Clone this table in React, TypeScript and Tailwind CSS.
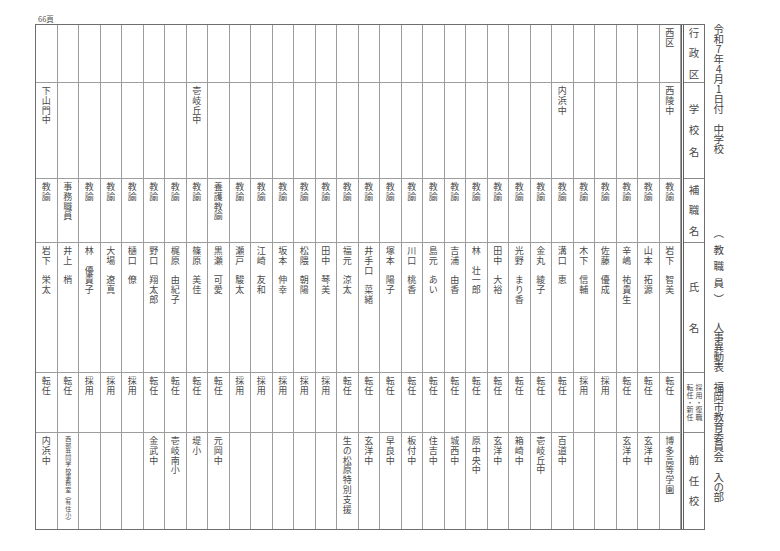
import React from 'react';

type Row = {
  ku?: string;
  school?: string;
  post: string;
  name: string;
  type: string;
  prev?: string;
  small?: boolean;
};

// right to left, as printed
const rows: Row[] = [
  { ku: '西区', school: '西陵中', post: '教諭', name: '岩下　智美', type: '転任', prev: '博多高等学園' },
  { post: '教諭', name: '山本　拓源', type: '転任', prev: '玄洋中' },
  { post: '教諭', name: '辛嶋　祐貴生', type: '転任', prev: '玄洋中' },
  { post: '教諭', name: '佐藤　優成', type: '採用' },
  { post: '教諭', name: '木下　信輔', type: '採用' },
  { school: '内浜中', post: '教諭', name: '溝口　恵', type: '転任', prev: '百道中' },
  { post: '教諭', name: '金丸　綾子', type: '転任', prev: '壱岐丘中' },
  { post: '教諭', name: '光野　まり香', type: '転任', prev: '箱崎中' },
  { post: '教諭', name: '田中　大裕', type: '転任', prev: '玄洋中' },
  { post: '教諭', name: '林　壮一郎', type: '転任', prev: '原中央中' },
  { post: '教諭', name: '吉浦　由香', type: '転任', prev: '城西中' },
  { post: '教諭', name: '島元　あい', type: '転任', prev: '住吉中' },
  { post: '教諭', name: '川口　桃香', type: '転任', prev: '板付中' },
  { post: '教諭', name: '塚本　陽子', type: '転任', prev: '早良中' },
  { post: '教諭', name: '井手口　菜緒', type: '転任', prev: '玄洋中' },
  { post: '教諭', name: '福元　涼太', type: '転任', prev: '生の松原特別支援' },
  { post: '教諭', name: '田中　琴美', type: '採用' },
  { post: '教諭', name: '松隈　朝陽', type: '採用' },
  { post: '教諭', name: '坂本　伸幸', type: '採用' },
  { post: '教諭', name: '江崎　友和', type: '採用' },
  { post: '教諭', name: '瀬戸　駿太', type: '採用' },
  { post: '養護教諭', name: '黒瀬　可愛', type: '転任', prev: '元岡中' },
  { school: '壱岐丘中', post: '教諭', name: '篠原　美佳', type: '転任', prev: '堤小' },
  { post: '教諭', name: '梶原　由紀子', type: '転任', prev: '壱岐南小' },
  { post: '教諭', name: '野口　翔太郎', type: '転任', prev: '金武中' },
  { post: '教諭', name: '樋口　僚', type: '採用' },
  { post: '教諭', name: '大場　遼真', type: '採用' },
  { post: '教諭', name: '林　優貴子', type: '採用' },
  { post: '事務職員', name: '井上　梢', type: '転任', prev: '西部共同学校事務室（有住小）', small: true },
  { school: '下山門中', post: '教諭', name: '岩下　栄太', type: '転任', prev: '内浜中' },
];

function Cell({ h, text, small, last }: { h: string; text?: string; small?: boolean; last?: boolean }) {
  return (
    <div className={`${h} ${last ? '' : 'border-b border-[#9d9d9d]'} flex justify-center items-start pt-[3px]`}>
      {text && (
        <span
          className={`[writing-mode:vertical-rl] leading-none ${
            small ? 'text-[6px] tracking-[0.3px]' : 'text-[9px] tracking-[0.8px]'
          }`}
        >
          {text}
        </span>
      )}
    </div>
  );
}

function HeadCell({ h, chars, gap, last }: { h: string; chars: string; gap: string; last?: boolean }) {
  return (
    <div className={`${h} ${last ? '' : 'border-b border-[#8a8a8a]'} flex flex-col items-center justify-center ${gap}`}>
      {chars.split('').map((c, i) => (
        <span key={i} className="text-[10.5px] leading-none">
          {c}
        </span>
      ))}
    </div>
  );
}

export default function App() {
  return (
    <div className="w-[780px] h-[551px] bg-white flex text-[#4a4a4a] font-['Noto_Sans_CJK_JP',sans-serif]">
      {/* table block */}
      <div className="ml-[35px] flex flex-col">
        <div className="h-[24px] flex items-end pb-[2px] pl-[3px]">
          <span className="text-[7.5px] leading-none text-[#555]">66頁</span>
        </div>

        <div className="w-[670px] h-[506px] flex flex-row-reverse border-[1.5px] border-[#6e6e6e]">
          {/* header column */}
          <div className="w-[23px] shrink-0 flex flex-col border-l-[3px] border-double border-[#5f5f5f]">
            <HeadCell h="h-[58px]" chars="行政区" gap="gap-[10px]" />
            <HeadCell h="h-[96px]" chars="学校名" gap="gap-[11px]" />
            <HeadCell h="h-[64px]" chars="補職名" gap="gap-[10px]" />
            <HeadCell h="h-[130px]" chars="氏名" gap="gap-[30px]" />
            <div className="h-[60px] border-b border-[#8a8a8a] flex items-center justify-center">
              <span className="[writing-mode:vertical-rl] text-[7px] leading-[9px] tracking-[0.4px]">
                採用・復職
                <br />
                転任・新任
              </span>
            </div>
            <HeadCell h="flex-1" chars="前任校" gap="gap-[10px]" last />
          </div>

          {/* data columns */}
          {rows.map((r, i) => (
            <div key={i} className="flex-1 min-w-0 flex flex-col border-r border-[#9d9d9d] first:border-r-0">
              <Cell h="h-[58px]" text={r.ku} />
              <Cell h="h-[96px]" text={r.school} />
              <Cell h="h-[64px]" text={r.post} />
              <Cell h="h-[130px]" text={r.name} />
              <Cell h="h-[60px]" text={r.type} />
              <Cell h="flex-1" text={r.prev} small={r.small} last />
            </div>
          ))}
        </div>
      </div>

      {/* title column */}
      <div className="ml-[3px] w-[20px] pt-[24px] flex flex-col items-center text-[10.5px] text-[#3f3f3f]">
        <span className="[writing-mode:vertical-rl] [text-orientation:upright] leading-none tracking-[-0.5px]">
          令和7年4月1日付　中学校
        </span>
        <span className="mt-[74px] [writing-mode:vertical-rl] leading-none tracking-[6px]">（教職員）</span>
        <span className="mt-[11px] [writing-mode:vertical-rl] leading-none tracking-[-0.5px]">
          人事異動表　福岡市教育委員会　入の部
        </span>
      </div>
    </div>
  );
}
